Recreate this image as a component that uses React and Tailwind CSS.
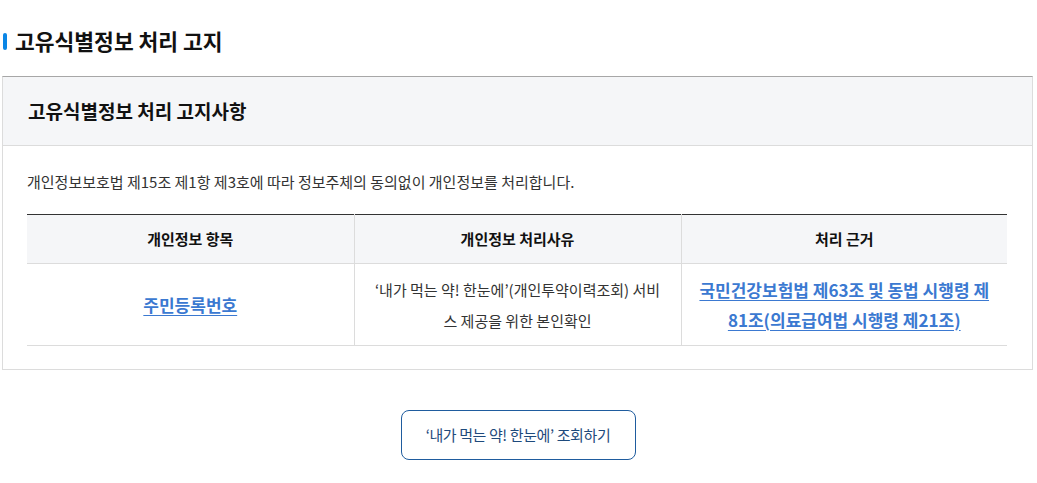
const font = { fontFamily: '"Noto Sans CJK KR", "Noto Sans", sans-serif' };

export default function App() {
  return (
    <div className="w-[1037px] h-[483px] bg-white text-[#222]" style={font}>
      <div className="flex items-center gap-[8px] pl-[3px] pt-[28px] h-[54px]">
        <span className="w-[4px] h-[17px] rounded-full bg-[#0a86e6]" />
        <h2 className="text-[21.5px] font-bold text-[#111] leading-[24px]">
          고유식별정보 처리 고지
        </h2>
      </div>

      <div className="ml-[2px] mt-[22px] w-[1031px] border border-t-[#a7a7a7] border-[#dcdcdc]">
        <div className="h-[69px] flex items-center px-[25px] bg-[#f5f6f8] border-b border-[#dcdcdc]">
          <h3 className="text-[19px] font-bold text-[#111]">고유식별정보 처리 고지사항</h3>
        </div>

        <div className="px-[24px] pt-[26px] pb-[23px]">
          <p className="text-[15px] leading-[20px] text-[#333]">
            개인정보보호법 제15조 제1항 제3호에 따라 정보주체의 동의없이 개인정보를 처리합니다.
          </p>

          <table className="mt-[22px] w-[980px] table-fixed border-collapse border-t border-t-[#333] text-center">
            <thead>
              <tr className="h-[49px] bg-[#f5f6f8] border-b border-[#dcdcdc]">
                <th className="w-[327px] text-[15px] font-bold text-[#111] border-r border-[#dcdcdc]">개인정보 항목</th>
                <th className="w-[327px] text-[15px] font-bold text-[#111] border-r border-[#dcdcdc]">개인정보 처리사유</th>
                <th className="text-[15px] font-bold text-[#111]">처리 근거</th>
              </tr>
            </thead>
            <tbody>
              <tr className="h-[82px] border-b border-[#dcdcdc]">
                <td className="border-r border-[#dcdcdc]">
                  <a className="text-[17px] font-bold text-[#3b79d1] underline underline-offset-[3px]">
                    주민등록번호
                  </a>
                </td>
                <td className="border-r border-[#dcdcdc] text-[15px] leading-[31px] text-[#333] whitespace-nowrap">
                  ‘내가 먹는 약! 한눈에’(개인투약이력조회) 서비
                  <br />
                  스 제공을 위한 본인확인
                </td>
                <td className="text-[17px] leading-[30px] font-bold whitespace-nowrap">
                  <a className="text-[#3b79d1] underline underline-offset-[3px]">
                    국민건강보험법 제63조 및 동법 시행령 제
                    <br />
                    81조(의료급여법 시행령 제21조)
                  </a>
                </td>
              </tr>
            </tbody>
          </table>
        </div>
      </div>

      <div className="flex justify-center mt-[40px]">
        <button className="ml-[-1px] w-[235px] h-[50px] rounded-[8px] border border-[#1f5c9e] bg-white text-[15px] text-[#1e4a7c] tracking-[-0.4px]">
          ‘내가 먹는 약! 한눈에’ 조회하기
        </button>
      </div>
    </div>
  );
}
